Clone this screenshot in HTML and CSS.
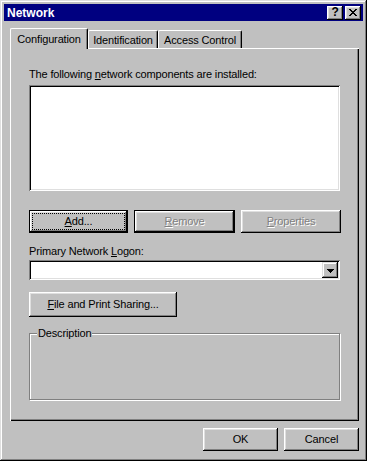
FILE: index.html
```html
<!DOCTYPE html>
<html>
<head>
<meta charset="utf-8">
<link rel="stylesheet" href="styles.css">
</head>
<body>
<div class="window">
  <div class="titlebar">
    <span class="title">Network</span>
    <div class="tbtns">
      <span class="tbtn help">?</span>
      <span class="tbtn close"><svg width="8" height="7" viewBox="0 0 8 7"><path d="M0 0h2v1h1v1h2v-1h1v-1h2v1h-1v1h-1v1h-1v1h1v1h1v1h1v1h-2v-1h-1v-1h-2v1h-1v1h-2v-1h1v-1h1v-1h1v-1h-1v-1h-1v-1h-1z" fill="#000"/></svg></span>
    </div>
  </div>
  <div class="client">
    <div class="tabs">
      <div class="tab sel w-conf">Configuration</div>
      <div class="tab w-ident">Identification</div>
      <div class="tab w-acc">Access Control</div>
    </div>
    <div class="panel">
      <div class="label">The following <u>n</u>etwork components are installed:</div>
      <div class="listbox"></div>
      <div class="btnrow">
        <div class="btn default"><span class="focus"><u>A</u>dd...</span></div>
        <div class="btn default disabled"><span><u>R</u>emove</span></div>
        <div class="btn disabled"><span><u>P</u>roperties</span></div>
      </div>
      <div class="label label2">Primary Network <u>L</u>ogon:</div>
      <div class="combo">
        <div class="combo-field"></div>
        <div class="combo-btn"><svg width="7" height="4" viewBox="0 0 7 4"><path d="M0 0h7v1h-1v1h-1v1h-1v1h-1v-1h-1v-1h-1v-1h-1z" fill="#000"/></svg></div>
      </div>
      <div class="btn fps"><span><u>F</u>ile and Print Sharing...</span></div>
      <fieldset class="group">
        <legend>Description</legend>
      </fieldset>
    </div>
    <div class="footer">
      <div class="btn fbtn"><span>OK</span></div>
      <div class="btn fbtn"><span>Cancel</span></div>
    </div>
  </div>
</div>
</body>
</html>
```
FILE: styles.css
```css
* { box-sizing: border-box; }
html, body {
  margin: 0;
  padding: 0;
  background: #c0c0c0;
}
body {
  font-family: "Liberation Sans", Arial, sans-serif;
  font-size: 11px;
  letter-spacing: -0.15px;
  color: #000;
}
u { text-decoration: underline; text-underline-offset: 1px; }

.window {
  width: 367px;
  height: 461px;
  padding: 4px;
  background: #c0c0c0;
  box-shadow: inset -1px -1px #000, inset 1px 1px #dfdfdf, inset -2px -2px #808080, inset 2px 2px #fff;
  display: flex;
  flex-direction: column;
}

.titlebar {
  height: 18px;
  background: #000080;
  display: flex;
  align-items: center;
  justify-content: space-between;
  padding: 0 2px 0 3px;
}
.title {
  color: #fff;
  font-weight: bold;
  font-size: 12px;
  letter-spacing: 0;
}
.tbtns { display: flex; gap: 2px; }
.tbtn {
  width: 16px;
  height: 14px;
  background: #c0c0c0;
  box-shadow: inset -1px -1px #000, inset 1px 1px #fff, inset -2px -2px #808080, inset 2px 2px #dfdfdf;
  display: flex;
  align-items: center;
  justify-content: center;
}
.help {
  font-weight: bold;
  font-size: 12px;
  line-height: 14px;
  padding-bottom: 1px;
}
.close svg { margin-top: -1px; }

.client {
  flex: 1;
  display: flex;
  flex-direction: column;
  padding: 7px 4px 6px 6px;
}

.tabs {
  display: flex;
  align-items: flex-end;
  height: 20px;
  position: relative;
  z-index: 2;
}
.tab {
  height: 18px;
  padding-top: 3px;
  line-height: 13px;
  text-align: center;
  border-top: 1px solid #fff;
  border-left: 1px solid #fff;
  border-right: 1px solid #000;
  border-radius: 2px 2px 0 0;
  box-shadow: inset -1px 0 #808080;
  background: #c0c0c0;
}
.tab.sel {
  height: 21px;
  margin-bottom: -1px;
  padding-top: 4px;
}
.w-conf { width: 78px; }
.w-ident { width: 70px; }
.w-acc { width: 84px; }

.panel {
  height: 373px;
  padding: 19px 17px 0 18px;
  border-top: 1px solid #fff;
  border-left: 1px solid #fff;
  box-shadow: inset -1px -1px #000, inset -2px -2px #808080;
  display: flex;
  flex-direction: column;
}
.label {
  line-height: 13px;
  height: 13px;
}
.listbox {
  margin-top: 4px;
  width: 311px;
  height: 106px;
  background: #fff;
  box-shadow: inset 1px 1px #808080, inset -1px -1px #fff, inset 2px 2px #000, inset -2px -2px #dfdfdf;
}

.btnrow {
  margin-top: 19px;
  display: grid;
  grid-template-columns: 99px 101px 100px;
  column-gap: 6px;
  width: 311px;
}
.btn {
  height: 23px;
  background: #c0c0c0;
  box-shadow: inset -1px -1px #000, inset 1px 1px #fff, inset -2px -2px #808080, inset 2px 2px #dfdfdf;
  display: flex;
  align-items: center;
  justify-content: center;
  line-height: 13px;
}
.btn.default {
  box-shadow: inset 0 0 0 1px #000, inset -2px -2px #000, inset 2px 2px #fff, inset -3px -3px #808080, inset 3px 3px #dfdfdf;
}
.focus {
  width: calc(100% - 8px);
  height: calc(100% - 8px);
  outline: 1px dotted #000;
  display: flex;
  align-items: center;
  justify-content: center;
}
.disabled span {
  color: #808080;
  text-shadow: 1px 1px 0 #fff;
}

.label2 { margin-top: 12px; }

.combo {
  margin-top: 2px;
  width: 311px;
  height: 20px;
  background: #fff;
  box-shadow: inset 1px 1px #808080, inset -1px -1px #fff, inset 2px 2px #000, inset -2px -2px #dfdfdf;
  display: flex;
  padding: 2px;
}
.combo-field { flex: 1; }
.combo-btn {
  width: 16px;
  height: 16px;
  background: #c0c0c0;
  box-shadow: inset -1px -1px #000, inset 1px 1px #dfdfdf, inset -2px -2px #808080, inset 2px 2px #fff;
  display: flex;
  align-items: center;
  justify-content: center;
}
.combo-btn svg { margin-top: 1px; }

.fps {
  margin-top: 12px;
  width: 148px;
  height: 25px;
}

.group {
  margin: 10px 0 0 0;
  width: 311px;
  height: 73px;
  padding: 0 6px 0 7px;
  border: 1px solid #808080;
  box-shadow: inset 1px 1px #fff, 1px 1px #fff;
  min-width: 0;
}
.group legend {
  padding: 0 1px;
  line-height: 13px;
  background: #c0c0c0;
}

.footer {
  margin-top: 7px;
  display: flex;
  justify-content: flex-end;
  gap: 6px;
}
.fbtn {
  width: 75px;
  height: 23px;
}
```
